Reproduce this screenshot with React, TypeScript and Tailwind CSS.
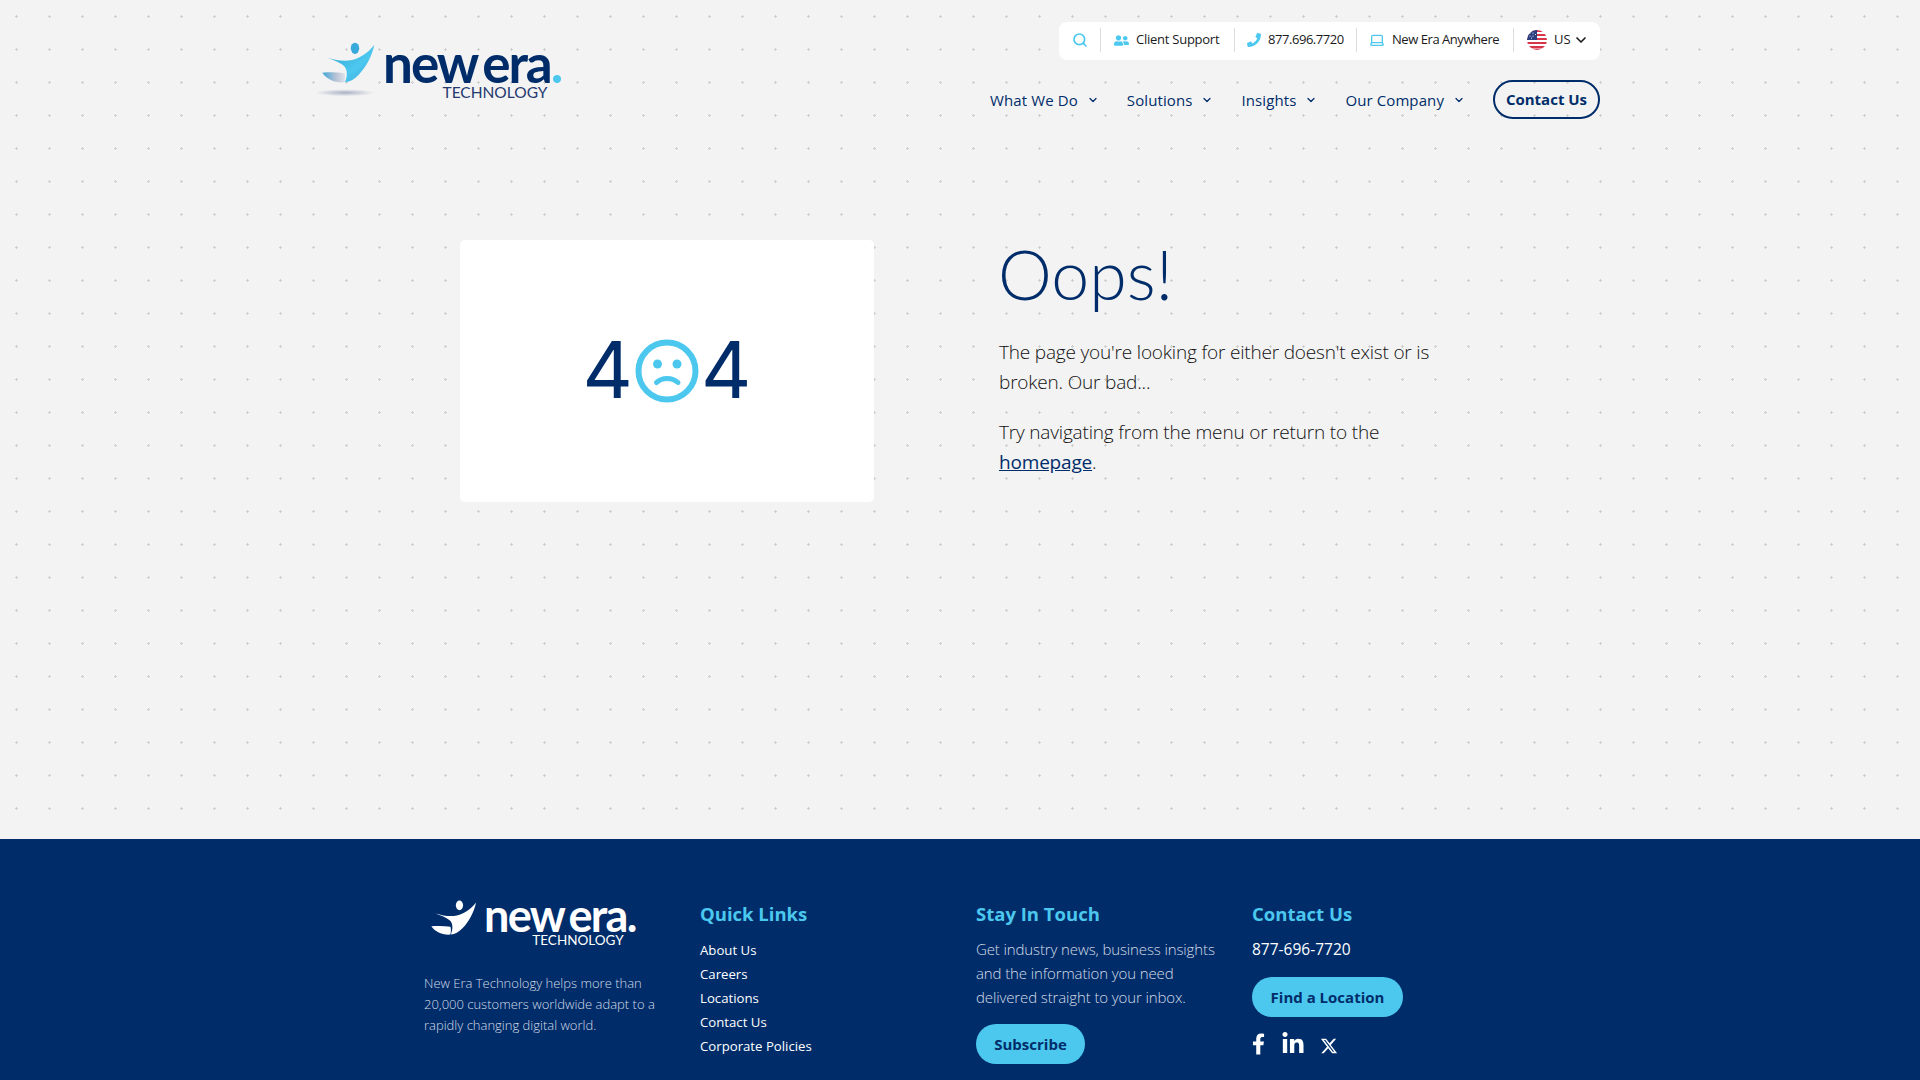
import { ChevronDown, Laptop, Search } from 'lucide-react';
import { FaFacebookF, FaLinkedinIn, FaPhoneAlt, FaUserFriends } from 'react-icons/fa';

function Swoosh({ white, className }: { white?: boolean; className: string }) {
  return (
    <svg viewBox="315 40 65 60" className={className}>
      <defs>
        <linearGradient id="swooshBlue" x1="0" y1="0" x2="1" y2="1">
          <stop offset="0" stopColor="#2f9fd0" />
          <stop offset="0.6" stopColor="#4cc8ef" />
          <stop offset="1" stopColor="#3aa6d8" />
        </linearGradient>
        <linearGradient id="swooshGray" x1="0" y1="0" x2="1" y2="0">
          <stop offset="0" stopColor="#3aa6d8" />
          <stop offset="0.6" stopColor="#b9c3d6" />
          <stop offset="1" stopColor="#dfe3ea" />
        </linearGradient>
        <radialGradient id="swooshShadow">
          <stop offset="0" stopColor="#aab2c6" />
          <stop offset="1" stopColor="#f3f3f3" />
        </radialGradient>
      </defs>
      {!white && <ellipse cx="345" cy="92.7" rx="30" ry="3.5" fill="url(#swooshShadow)" />}
      <ellipse cx="355" cy="48.3" rx="4.2" ry="5.6" fill={white ? '#fff' : '#37a9dc'} />
      <path
        d="M327.7 57.7C336 60.5 345 61.5 352 60C360 58.2 368 53 374.3 45C372 56 366 67 358.5 75C354 79.5 350 81.8 345 82.3C347.5 76 347.5 70 344.5 66.5C341.5 62.8 334 60.5 327.7 57.7Z"
        fill={white ? '#fff' : 'url(#swooshBlue)'}
      />
      <path
        d="M322.3 72.7C329 72 337 72 344.5 73.2C345.3 76 345.2 79 344.5 82.3C334.5 83 326.5 79 322.3 72.7Z"
        fill={white ? '#fff' : 'url(#swooshGray)'}
      />
    </svg>
  );
}

function Flag() {
  return (
    <svg viewBox="0 0 20 20" className="w-5 h-5">
      <defs>
        <clipPath id="flagClip">
          <circle cx="10" cy="10" r="10" />
        </clipPath>
      </defs>
      <g clipPath="url(#flagClip)">
        <rect width="20" height="20" fill="#fff" />
        <rect y="0" width="20" height="2" fill="#d8354a" />
        <rect y="4" width="20" height="2" fill="#d8354a" />
        <rect y="8" width="20" height="2" fill="#d8354a" />
        <rect y="12" width="20" height="2" fill="#d8354a" />
        <rect y="16" width="20" height="2" fill="#d8354a" />
        <rect y="18.5" width="20" height="1.5" fill="#d8354a" />
        <rect width="10" height="10" fill="#2b3f80" />
        <circle cx="3" cy="3" r="0.6" fill="#fff" />
        <circle cx="6" cy="3" r="0.6" fill="#fff" />
        <circle cx="3" cy="6" r="0.6" fill="#fff" />
        <circle cx="6" cy="6" r="0.6" fill="#fff" />
        <circle cx="8.5" cy="4.5" r="0.6" fill="#fff" />
        <circle cx="4.5" cy="8" r="0.6" fill="#fff" />
      </g>
    </svg>
  );
}

function Divider() {
  return <div className="w-px h-6 bg-[#dcdcdc]" />;
}

function NavItem({ label }: { label: string }) {
  return (
    <a className="flex items-center gap-[9px] text-[15px] tracking-[0.1px] text-[#002d6a]">
      {label}
      <ChevronDown className="w-[12px] h-[12px]" strokeWidth={2.5} />
    </a>
  );
}

const quickLinks = ['About Us', 'Careers', 'Locations', 'Contact Us', 'Corporate Policies'];

export default function App() {
  return (
    <div className="h-[1080px] overflow-hidden flex flex-col font-['Open_Sans',sans-serif] bg-[#f3f3f3]">
      <div className="flex-1 relative">
        {/* plus pattern behind the page */}
        <svg className="absolute inset-0 w-full h-full">
          <defs>
            <pattern id="plus" width="33" height="33" patternUnits="userSpaceOnUse">
              <rect x="16" y="15" width="1" height="3" fill="#d0d0d0" />
              <rect x="15" y="16" width="3" height="1" fill="#d0d0d0" />
            </pattern>
          </defs>
          <rect width="100%" height="100%" fill="url(#plus)" />
        </svg>

        <div className="relative">
          <header className="w-[1290px] ml-[310px] flex justify-between h-[130px]">
            <div className="flex items-start pt-[40px]">
              <Swoosh className="w-[65px] h-[60px] ml-[5px] mr-[3px]" />
              <div className="flex flex-col items-end font-['Lato',sans-serif] mt-[6px]">
                <div className="font-bold text-[53px] leading-[34px] tracking-[-2px] [word-spacing:-5px] text-[#002d6a] whitespace-nowrap">
                  new era<span className="text-[#4cc8ef]">.</span>
                </div>
                <div className="text-[15.5px] leading-[14px] font-normal text-[#24396f] mr-[14px] mt-[5px]">TECHNOLOGY</div>
              </div>
            </div>

            <div className="flex flex-col items-end pt-[22px]">
              <div className="h-[38px] w-[541px] bg-white rounded-[8px] flex items-center pl-[13px] pb-[2px] text-[13px] text-[#1a1a1a]">
                <Search className="w-[16px] h-[16px] text-[#4cc8ef] mr-[12px]" strokeWidth={2.5} />
                <Divider />
                <FaUserFriends className="w-[15px] h-[15px] text-[#4cc8ef] ml-[13px] mr-[7px]" />
                <span className="w-[84px] whitespace-nowrap tracking-[-0.25px]">Client Support</span>
                <div className="ml-[14px]"><Divider /></div>
                <FaPhoneAlt className="w-[14px] h-[14px] text-[#4cc8ef] ml-[12px] mr-[7px] scale-x-[-1]" />
                <span className="w-[75px] whitespace-nowrap tracking-[-0.45px]">877.696.7720</span>
                <div className="ml-[13px]"><Divider /></div>
                <Laptop className="w-[16px] h-[16px] text-[#4cc8ef] ml-[12px] mr-[7px]" />
                <span className="w-[108px] whitespace-nowrap tracking-[-0.45px]">New Era Anywhere</span>
                <div className="ml-[13px]"><Divider /></div>
                <div className="ml-[13px] mr-[7px]"><Flag /></div>
                <span>US</span>
                <ChevronDown className="w-[16px] h-[16px] ml-[2px] text-[#1a1a1a]" strokeWidth={2.5} />
              </div>
              <nav className="flex items-center mt-[20px]">
                <div className="flex items-center gap-[28px] mr-[28px] mt-[1px]">
                  <NavItem label="What We Do" />
                  <NavItem label="Solutions" />
                  <NavItem label="Insights" />
                  <NavItem label="Our Company" />
                </div>
                <a className="h-[39px] w-[107px] flex items-center justify-center rounded-full border-2 border-[#002d6a] text-[15px] font-bold text-[#002d6a]">
                  Contact Us
                </a>
              </nav>
            </div>
          </header>

          <main className="flex mt-[110px] ml-[460px]">
            <div className="w-[414px] h-[262px] bg-white rounded-[5px] flex items-center justify-center">
              <div className="flex items-center font-['Inter',sans-serif] text-[78px] leading-none text-[#002d6a] -mt-[2px]">
                <span>4</span>
                <svg viewBox="0 0 64 64" className="w-[64px] h-[64px] mx-[2px] translate-y-[1px]">
                  <circle cx="32" cy="32" r="28.5" fill="none" stroke="#4cc8ef" strokeWidth="6" />
                  <circle cx="22.5" cy="25" r="4.5" fill="#4cc8ef" />
                  <circle cx="42" cy="25" r="4.5" fill="#4cc8ef" />
                  <path d="M21.5 43.5C27 38 37 38 43 43.5" fill="none" stroke="#4cc8ef" strokeWidth="5" strokeLinecap="round" />
                </svg>
                <span>4</span>
              </div>
            </div>
            <div className="ml-[125px] w-[450px]">
              <h1 className="text-[68px] leading-[72px] font-light font-['Lato',sans-serif] text-[#002d6a] -mt-[2px] -ml-[1px]">Oops!</h1>
              <p className="mt-[27px] text-[19px] leading-[30px] font-light tracking-[-0.18px] text-[#111]">
                The page you're looking for either doesn't exist or is broken. Our bad...
              </p>
              <p className="mt-[20px] text-[19px] leading-[30px] font-light tracking-[-0.18px] text-[#111]">
                Try navigating from the menu or return to the <a className="font-normal text-[#002d6a] underline">homepage</a>.
              </p>
            </div>
          </main>
        </div>
      </div>

      <footer className="h-[241px] bg-[#002d6a] pl-[424px] flex text-white">
        <div className="w-[276px] pt-[56px]">
          <div className="flex items-start h-[60px]">
            <Swoosh white className="w-[56px] h-[52px] ml-[1px] mr-[3px] mt-[3px]" />
            <div className="flex flex-col items-end font-['Lato',sans-serif] mt-[5px]">
              <div className="font-bold text-[45px] leading-[30px] tracking-[-1.7px] [word-spacing:-4px] whitespace-nowrap">new era.</div>
              <div className="text-[13.5px] leading-[12px] mr-[12px] mt-[4px]">TECHNOLOGY</div>
            </div>
          </div>
          <p className="mt-[18px] w-[240px] text-[13px] leading-[21px] font-light text-[#d5dbe6]">
            New Era Technology helps more than 20,000 customers worldwide adapt to a rapidly changing digital world.
          </p>
        </div>
        <div className="w-[276px] pt-[61px]">
          <h3 className="text-[18.5px] leading-[28px] font-bold text-[#4cc8ef]">Quick Links</h3>
          <ul className="mt-[10px] text-[13.2px] leading-[24px] font-normal">
            {quickLinks.map((link) => (
              <li key={link}>{link}</li>
            ))}
          </ul>
        </div>
        <div className="w-[276px] pt-[61px]">
          <h3 className="text-[18.5px] leading-[28px] font-bold text-[#4cc8ef]">Stay In Touch</h3>
          <p className="mt-[9px] w-[250px] text-[15px] leading-[24px] font-light tracking-[-0.12px] text-[#d5dbe6]">
            Get industry news, business insights and the information you need delivered straight to your inbox.
          </p>
          <a className="mt-[15px] inline-flex items-center justify-center w-[109px] h-[40px] rounded-full bg-[#4cc8ef] text-[15px] font-bold text-[#002d6a]">
            Subscribe
          </a>
        </div>
        <div className="pt-[61px]">
          <h3 className="text-[18.5px] leading-[28px] font-bold text-[#4cc8ef]">Contact Us</h3>
          <div className="mt-[9px] text-[15.5px] leading-[24px]">877-696-7720</div>
          <a className="mt-[16px] flex items-center justify-center w-[151px] h-[40px] rounded-full bg-[#4cc8ef] text-[15px] font-bold text-[#002d6a]">
            Find a Location
          </a>
          <div className="flex items-center mt-[15px]">
            <FaFacebookF className="w-[13px] h-[22px]" />
            <FaLinkedinIn className="w-[24px] h-[24px] ml-[16px]" />
            <svg viewBox="0 0 24 24" className="w-[18px] h-[18px] ml-[15px] mt-[4px] fill-white">
              <path d="M18.244 2.25h3.308l-7.227 8.26 8.502 11.24H16.17l-5.214-6.817L4.99 21.75H1.68l7.73-8.835L1.254 2.25H8.08l4.713 6.231zm-1.161 17.52h1.833L7.084 4.126H5.117z" />
            </svg>
          </div>
        </div>
      </footer>
    </div>
  );
}
